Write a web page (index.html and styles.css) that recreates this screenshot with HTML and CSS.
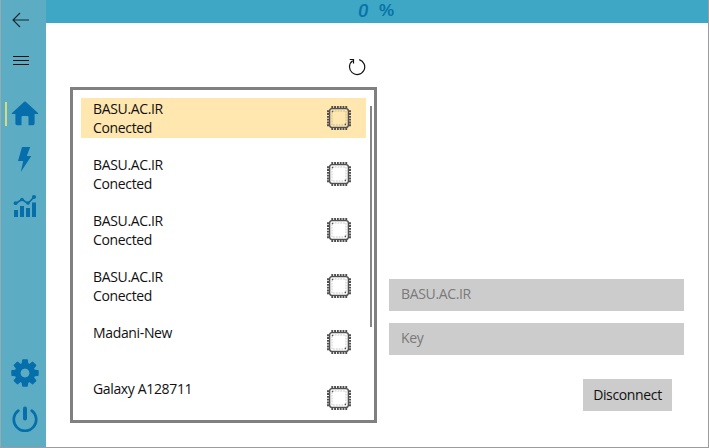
FILE: index.html
```html
<!DOCTYPE html>
<html lang="en">
<head>
<meta charset="utf-8">
<title>Wi-Fi</title>
<link rel="stylesheet" href="styles.css">
</head>
<body>
<svg class="defs" width="0" height="0">
  <symbol id="chip" viewBox="0 0 26 26">
    <g fill="none" stroke="currentColor">
      <path d="M5.3 2.2h16M5.3 23.8h16M2.2 5.300v16M23.800 5.300v16" stroke-width="2.400" stroke-dasharray="1.900 .9"/>
      <rect x="3.600" y="3.600" width="18.800" height="18.800" rx="2.400" stroke-width="1.400"/>
      <rect x="6" y="6" width="14" height="14" stroke-width=".8" stroke-dasharray="1.700 1.100" opacity=".4"/>
    </g>
    <circle cx="6.500" cy="6.500" r=".8" fill="currentColor"/>
    <circle cx="19.400" cy="19.400" r=".8" fill="currentColor"/>
  </symbol>
</svg>
<div class="window">
  <nav class="sidebar">
    <a class="nav back"><svg width="18" height="16" viewBox="0 0 18 16"><path d="M8 1L1 8l7 7M1 8h16" fill="none" stroke="#16272d" stroke-width="1.1"/></svg></a>
    <a class="nav menu"><svg width="16" height="10" viewBox="0 0 16 10"><path d="M0 .5h16M0 4.5h16M0 8.5h16" stroke="#111" stroke-width="1"/></svg></a>
    <a class="nav home"><i class="marker"></i><svg width="28" height="25" viewBox="0 0 28 25"><path d="M14 .6q.7 0 1.3.6L27 12q.9 1-.4 1h-3v9.5q0 1.7-1.7 1.7h-4.4v-8q0-1.1-1.1-1.1h-4.8q-1.1 0-1.1 1.100v8H6.1q-1.7 0-1.7-1.7V13h-3q-1.3 0-.4-1L12.7 1.2Q13.300.6 14 .6z"/></svg></a>
    <a class="nav"><svg width="15" height="27" viewBox="0 0 15 27"><path d="M5 1h8.200L9.800 10h4.500L3.800 26 6.200 15H1z"/></svg></a>
    <a class="nav"><svg width="24" height="24" viewBox="0 0 24 24"><path d="M1 16h4v7H1zM7 12h4v11H7zM13 14h4v9h-4zM19 8.500h4V23h-4z"/><path d="M2.500 9.500L9 5.500l6 4 6-6.500" fill="none" stroke="#056eab" stroke-width="1.700"/><circle cx="2.600" cy="9.200" r="1.900"/><circle cx="9" cy="5.500" r="1.800"/><circle cx="15" cy="9" r="1.800"/><circle cx="21" cy="3" r="2.100"/></svg></a>
    <a class="nav settings"><svg width="28" height="28" viewBox="-14 -14 28 28">
      <g><path id="tooth" d="M-2-13.700h4q.8 0 .9.800l.7 6.900h-7.200l.7-6.900q.1-.8.900-.8z"/><use href="#tooth" transform="rotate(45)"/><use href="#tooth" transform="rotate(90)"/><use href="#tooth" transform="rotate(135)"/><use href="#tooth" transform="rotate(180)"/><use href="#tooth" transform="rotate(225)"/><use href="#tooth" transform="rotate(270)"/><use href="#tooth" transform="rotate(315)"/></g>
      <circle r="7.300" fill="none" stroke="#056eab" stroke-width="6"/><circle r="4.300" fill="#5cadc4"/></svg></a>
    <a class="nav power"><svg width="26" height="26" viewBox="0 0 26 26"><g fill="none" stroke="#056eab" stroke-linecap="round"><path d="M6.300 4.700A11.200 11.200 0 1 0 19.700 4.700" stroke-width="2.700"/><path d="M13 2.500v10" stroke-width="4"/></g></svg></a>
  </nav>
  <main class="page">
    <header class="topbar"><span class="digit">0</span><span class="unit">%</span></header>
    <div class="toolbar"><svg width="18" height="18" viewBox="0 0 18 18"><path d="M11.200 1.600A7.600 7.600 0 1 1 4.600 2.800M1.700 1.500h3.800v4" fill="none" stroke="#111" stroke-width="1.200"/></svg></div>
    <div class="content">
      <section class="networks">
        <ul class="list">
          <li class="item selected"><p>BASU.AC.IR<br>Conected</p><svg class="chip"><use href="#chip"/></svg></li>
          <li class="item"><p>BASU.AC.IR<br>Conected</p><svg class="chip"><use href="#chip"/></svg></li>
          <li class="item"><p>BASU.AC.IR<br>Conected</p><svg class="chip"><use href="#chip"/></svg></li>
          <li class="item"><p>BASU.AC.IR<br>Conected</p><svg class="chip"><use href="#chip"/></svg></li>
          <li class="item"><p>Madani-New</p><svg class="chip"><use href="#chip"/></svg></li>
          <li class="item"><p>Galaxy A128711</p><svg class="chip"><use href="#chip"/></svg></li>
        </ul>
        <i class="scrollbar"></i>
      </section>
      <form class="form">
        <div class="field">BASU.AC.IR</div>
        <div class="field">Key</div>
        <button class="button" type="button">Disconnect</button>
      </form>
    </div>
  </main>
</div>
</body>
</html>
```
FILE: styles.css
```css
* { box-sizing: border-box; }
body { margin: 0; font: 14px/19px "Open Sans", "Noto Sans", sans-serif; color: #111; background: #fff; overflow: hidden; }
.defs { display: none; }
.window { display: flex; width: 709px; height: 448px; border: solid #9a9c9e; border-width: 0 1px 1px 0; }
.sidebar { display: flex; flex-direction: column; width: 46px; flex: none; background: #5cadc4; border-left: 1px solid #93abb3; fill: #056eab; }
.nav { display: flex; align-items: center; justify-content: center; height: 46px; flex: none; padding-left: 2px; }
.nav svg { display: block; }
.back { height: 40px; padding: 0 5px 0 0; }
.menu { height: 41px; padding: 0 6px 0 0; }
.home { height: 64px; position: relative; }
.marker { position: absolute; left: 4px; top: 21px; width: 2px; height: 24px; background: #d9d982; }
.home + .nav { height: 29px; }
.home + .nav + .nav { height: 64px; }
.settings { margin-top: auto; }
.power { margin-bottom: 5px; }
.page { flex: 1; display: flex; flex-direction: column; }
.topbar { display: flex; height: 23px; background: #3ea7c6; color: #0873a8; padding-left: 312px; }
.digit { font: italic 500 19px/21px Roboto, sans-serif; width: 21px; }
.unit { font: bold 17px/21px "Liberation Sans", sans-serif; }
.toolbar { height: 64px; padding: 35px 0 0 302px; }
.toolbar svg { display: block; }
.content { display: flex; gap: 12px; padding-left: 24px; }
.networks { display: flex; width: 307px; height: 336px; border: 3px solid #808080; overflow: hidden; }
.list { width: 285px; margin: 8px 0 0 8px; padding: 0; list-style: none; }
.item { display: flex; justify-content: space-between; height: 40px; margin-bottom: 16px; padding: 1px 14px 0 12px; }
.item p { margin: 0; letter-spacing: -.35px; }
.selected { background: #ffe7af; }
.chip { width: 26px; height: 26px; margin-top: 6px; color: #505050; }
.scrollbar { width: 2px; height: 221px; margin: 16px 0 0 4px; background: #858585; }
.form { width: 295px; padding-top: 192px; display: flex; flex-direction: column; }
.field { height: 32px; margin-bottom: 12px; padding: 0 12px; line-height: 30px; background: #ccc; color: #7a7a7a; letter-spacing: -.35px; }
.button { align-self: flex-end; width: 89px; height: 32px; margin: 12px 12px 0 0; padding: 0 0 1px; border: 0; background: #ccc; color: #111; font: inherit; letter-spacing: -.35px; }
```
